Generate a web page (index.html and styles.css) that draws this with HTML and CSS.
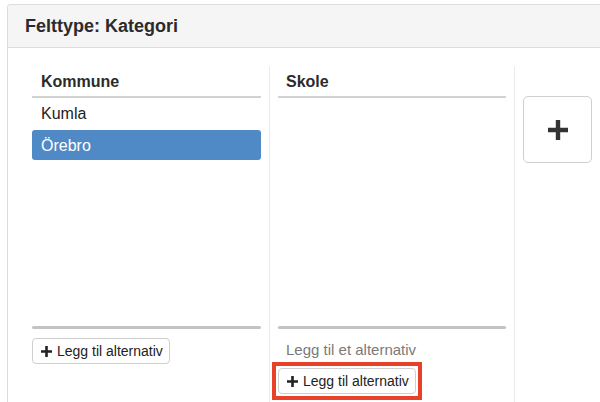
FILE: index.html
```html
<!DOCTYPE html>
<html lang="no">
<head>
<meta charset="utf-8">
<title>Felttype: Kategori</title>
<link rel="stylesheet" href="styles.css">
</head>
<body>
<div class="panel">
  <div class="panel-heading">Felttype: Kategori</div>
  <div class="panel-body">
    <div class="col col-a">
      <div class="col-head">Kommune</div>
      <ul class="list">
        <li class="item">Kumla</li>
        <li class="item active">Örebro</li>
      </ul>
      <div class="bar"></div>
      <div class="foot">
        <button class="btn"><svg class="ico" viewBox="0 0 11 11" width="11" height="11"><path d="M5.5 0V11M0 5.5H11" stroke="#222" stroke-width="2.6" fill="none"/></svg>Legg til alternativ</button>
      </div>
    </div>
    <div class="col col-b">
      <div class="col-head">Skole</div>
      <ul class="list"></ul>
      <div class="bar"></div>
      <div class="hint">Legg til et alternativ</div>
      <div class="highlight">
        <button class="btn"><svg class="ico" viewBox="0 0 11 11" width="11" height="11"><path d="M5.5 0V11M0 5.5H11" stroke="#222" stroke-width="2.6" fill="none"/></svg>Legg til alternativ</button>
      </div>
    </div>
    <div class="col col-c">
      <button class="btn-add" aria-label="Legg til kolonne"><svg viewBox="0 0 20 20" width="20" height="20"><path d="M10 0V20M0 10H20" stroke="#333" stroke-width="4.4" fill="none"/></svg></button>
    </div>
  </div>
</div>
</body>
</html>
```

FILE: styles.css
```css
html, body {
  margin: 0;
  padding: 0;
  background: #fff;
  overflow: hidden;
}
body {
  font-family: "Liberation Sans", Arial, Helvetica, sans-serif;
  color: #333;
  width: 600px;
  height: 402px;
}
.panel {
  margin: 4px 0 0 7px;
  width: 593px;
  box-sizing: border-box;
  border: 1px solid #dcdcdc;
  border-right: none;
  border-bottom: none;
  border-radius: 4px 0 0 0;
  background: #fff;
}
.panel-heading {
  background: #f5f5f5;
  border-bottom: 1px solid #dcdcdc;
  border-radius: 4px 0 0 0;
  padding: 10px 17px 10px 17px;
  font-size: 18px;
  line-height: 22px;
  font-weight: bold;
  color: #2b2b2b;
}
.panel-body {
  display: flex;
  align-items: flex-start;
  padding: 18px 0 0 16px;
  height: 354px;
  box-sizing: border-box;
}
.col {
  padding: 0 8px;
  height: 336px;
  box-sizing: border-box;
}
.col-a {
  width: 246px;
  border-right: 1px solid #ececec;
}
.col-b {
  width: 245px;
  border-right: 1px solid #ececec;
}
.col-c {
  padding-top: 30px;
}
.col-head {
  font-size: 16px;
  line-height: 20px;
  font-weight: bold;
  color: #2b2b2b;
  padding: 6px 9px 4px 9px;
  border-bottom: 2px solid #d2d2d2;
}
.col-b .col-head {
  padding-left: 8px;
}
.list {
  list-style: none;
  margin: 0;
  padding: 0;
  height: 228px;
}
.item {
  font-size: 16px;
  line-height: 20px;
  padding: 5px 9px 5px 9px;
  margin-bottom: 2px;
  color: #222;
  border-radius: 3px;
}
.item:first-child {
  padding-top: 6px;
  padding-bottom: 4px;
}
.item.active {
  background: #508ac6;
  color: #fff;
  padding-top: 6px;
  padding-bottom: 4px;
}
.bar {
  height: 3px;
  background: #c3c3c3;
  border-radius: 2px;
}
.foot {
  padding-top: 9px;
}
.btn {
  display: inline-flex;
  align-items: center;
  gap: 5px;
  font-family: "Liberation Sans", Arial, Helvetica, sans-serif;
  font-size: 14px;
  line-height: 20px;
  color: #222;
  background: #fff;
  border: 1px solid #cfcfcf;
  border-radius: 4px;
  padding: 2px 6px 2px 8px;
  margin: 0;
}
.ico {
  display: block;
}
.hint {
  font-size: 15px;
  line-height: 20px;
  color: #7a7a7a;
  padding: 11px 0 0 8px;
}
.highlight {
  display: inline-block;
  margin: 2px 0 0 -6px;
  border: 4px solid #e8412a;
  padding: 2px;
  background: #fff;
}
.highlight .btn {
  display: flex;
}
.btn-add {
  display: flex;
  align-items: center;
  justify-content: center;
  width: 69px;
  height: 67px;
  padding: 0;
  margin: 0;
  background: #fff;
  border: 1px solid #cfcfcf;
  border-radius: 5px;
}
```
